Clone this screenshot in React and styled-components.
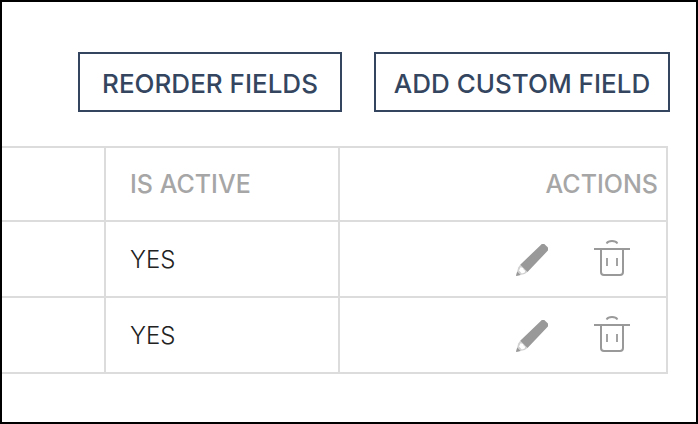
import React from 'react';
import styled, { createGlobalStyle } from 'styled-components';

const colors = {
  navy: '#34465f',
  grey: '#a6a6a6',
  icon: '#999',
  dark: '#222',
  line: '#dcdcdc'
};

const GlobalStyle = createGlobalStyle`
  * {
    box-sizing: border-box;
  }
  body {
    margin: 0;
    background: #fff;
    font-family: Inter, "Open Sans", sans-serif;
    font-size: 24px;
  }
`;

const StyledPage = styled.main`
  min-height: 100vh;
  padding: 50px 26px 48px 0;
  border: 2px solid #000;
`;

const StyledToolbar = styled.div`
  display: flex;
  justify-content: flex-end;
  gap: 32px;
  margin-bottom: 34px;
`;

const StyledButton = styled.button`
  min-width: ${({ $wide }) => ($wide ? 296 : 264)}px;
  height: 60px;
  padding: 4px 16px 0;
  border: 2px solid ${colors.navy};
  background: transparent;
  color: ${colors.navy};
  font-family: inherit;
  font-size: 26px;
  font-weight: 500;
  line-height: 32px;
  white-space: nowrap;
  cursor: pointer;
`;

const StyledTableWrap = styled.div`
  padding-right: 2px;
`;

const StyledTable = styled.table`
  width: 100%;
  table-layout: fixed;
  border-collapse: separate;
  border-spacing: 0;
  border-top: 2px solid ${colors.line};
`;

const StyledCol = styled.col`
  width: ${({ $width }) => $width || 'auto'};
`;

const StyledHeader = styled.th`
  height: 74px;
  padding: 0 8px 0 24px;
  border-right: 2px solid ${colors.line};
  border-bottom: 2px solid ${colors.line};
  color: ${colors.grey};
  font-size: 25px;
  font-weight: 500;
  line-height: 32px;
  text-align: ${({ $right }) => ($right ? 'right' : 'left')};
`;

const StyledCell = styled.td`
  height: 76px;
  padding: 2px 24px 0;
  border-right: 2px solid ${colors.line};
  border-bottom: 2px solid ${colors.line};
  color: ${colors.dark};
  font-weight: 300;
  line-height: 32px;
`;

const StyledActionsCell = styled(StyledCell)`
  padding: 0 36px 2px 24px;
`;

const StyledActions = styled.div`
  display: flex;
  justify-content: flex-end;
  align-items: flex-end;
  gap: 46px;
`;

const StyledIconButton = styled.button`
  display: flex;
  padding: 0;
  border: 0;
  background: none;
  color: ${colors.icon};
  cursor: pointer;
`;

const PencilIcon = () => (
  <svg width="32" height="32" viewBox="0 0 32 32" aria-hidden="true">
    <path
      d="M24.800 .9a3.200 3.200 0 0 1 4.500 0l1.900 1.900a3.200 3.200 0 0 1 0 4.500L11.500 28 4.200 20.800z"
      fill="currentColor"
    />
    <path
      d="M4.200 20.800 2.200 23.500 0 32l8.600-2L11.500 28z"
      fill="currentColor"
      fillOpacity="0.45"
    />
    <path d="M4.600 23.200 7 24l.6 1.600 1.500 1.200-.3 1.600-3 1-2.800-2.800z" fill="#fff" />
    <path d="M1.200 27.600 0 32l4.600-1.100z" fill="currentColor" />
  </svg>
);

const TrashIcon = () => (
  <svg
    width="36"
    height="36"
    viewBox="0 0 36 36"
    fill="none"
    stroke="currentColor"
    aria-hidden="true"
  >
    <path d="M0 9h36" strokeWidth="2" />
    <path d="M12.500 3.400Q14 1 18 1t5.500 2.400" strokeWidth="1.800" />
    <path d="M7 10v22q0 3 3 3h16q3 0 3-3V10" strokeWidth="2" />
    <path d="M13 18v8M23 18v8" strokeWidth="1.800" />
  </svg>
);

const rows = [
  { id: 1, active: 'YES' },
  { id: 2, active: 'YES' }
];

const App = () => (
  <>
    <GlobalStyle />
    <StyledPage>
      <StyledToolbar>
        <StyledButton type="button">REORDER FIELDS</StyledButton>
        <StyledButton type="button" $wide>ADD CUSTOM FIELD</StyledButton>
      </StyledToolbar>
      <StyledTableWrap>
        <StyledTable>
          <colgroup>
            <StyledCol $width="104px" />
            <StyledCol $width="234px" />
            <StyledCol />
          </colgroup>
          <thead>
            <tr>
              <StyledHeader as="td" />
              <StyledHeader scope="col">IS ACTIVE</StyledHeader>
              <StyledHeader scope="col" $right>ACTIONS</StyledHeader>
            </tr>
          </thead>
          <tbody>
            {rows.map(row => (
              <tr key={row.id}>
                <StyledCell />
                <StyledCell>{row.active}</StyledCell>
                <StyledActionsCell>
                  <StyledActions>
                    <StyledIconButton type="button" aria-label="Edit">
                      <PencilIcon />
                    </StyledIconButton>
                    <StyledIconButton type="button" aria-label="Delete">
                      <TrashIcon />
                    </StyledIconButton>
                  </StyledActions>
                </StyledActionsCell>
              </tr>
            ))}
          </tbody>
        </StyledTable>
      </StyledTableWrap>
    </StyledPage>
  </>
);

export default App;
